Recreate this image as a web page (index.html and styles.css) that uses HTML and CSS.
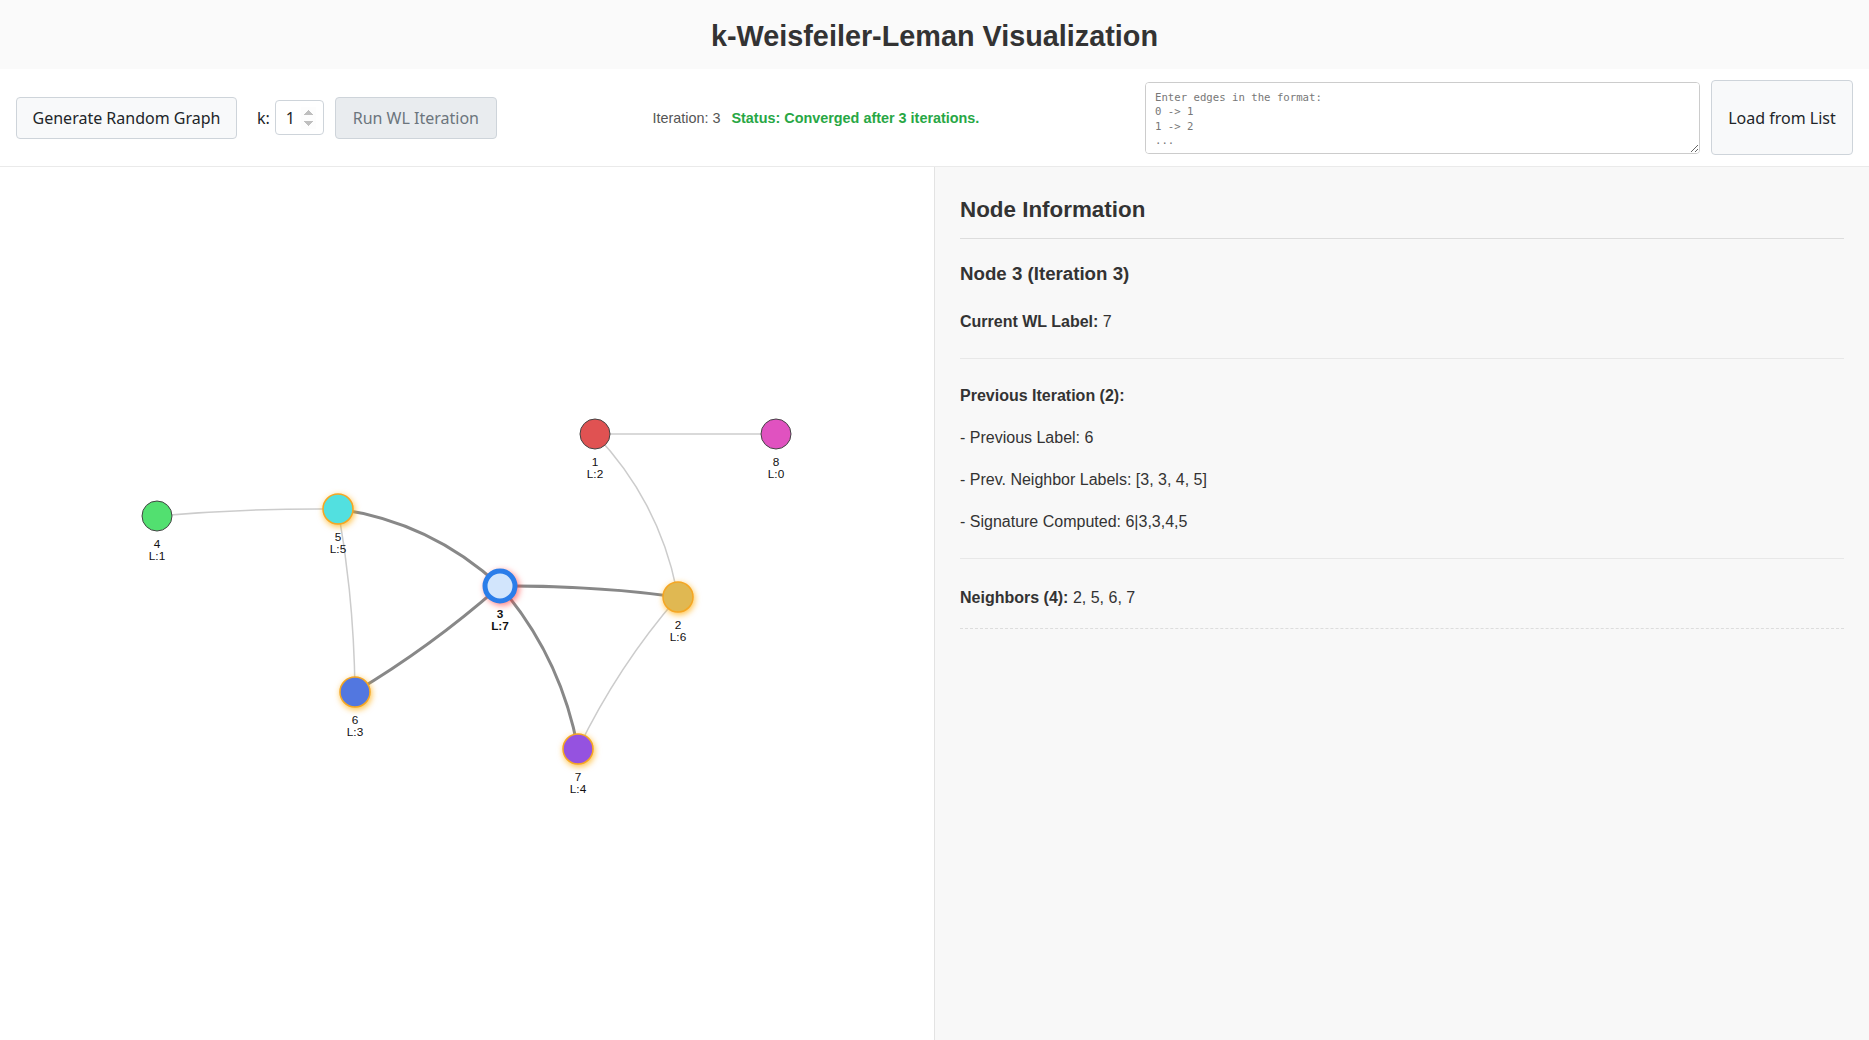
FILE: index.html
```html
<!DOCTYPE html>
<html lang="en">
<head>
<meta charset="utf-8">
<title>k-Weisfeiler-Leman Visualization</title>
<link rel="stylesheet" href="styles.css">
</head>
<body>
<header class="page-header">
  <h1>k-Weisfeiler-Leman Visualization</h1>
</header>
<div class="toolbar">
  <div class="controls">
    <button class="btn btn-gen">Generate Random Graph</button>
    <label class="k-label" for="k">k:</label>
    <input class="k-input" id="k" type="number" value="1" min="1">
    <button class="btn btn-disabled" disabled>Run WL Iteration</button>
  </div>
  <div class="status">
    <span class="iteration">Iteration: 3</span>
    <span class="converged">Status: Converged after 3 iterations.</span>
  </div>
  <div class="edge-input">
    <textarea class="edges" placeholder="Enter edges in the format:&#10;0 -> 1&#10;1 -> 2&#10;..."></textarea>
    <button class="btn btn-load">Load from List</button>
  </div>
</div>
<main class="main">
  <section class="graph">
    <svg class="graph-svg" viewBox="0 167 934 873" preserveAspectRatio="xMinYMin meet">
      <g class="edges-thin">
        <path d="M157,516 Q250,508 338,509"/>
        <path d="M338,509 Q354,598 355,692"/>
        <path d="M595,434 L776,434"/>
        <path d="M595,434 Q661,503 678,597"/>
        <path d="M678,597 Q618,666 578,749"/>
      </g>
      <g class="edges-thick">
        <path d="M338,509 Q431,522 500,586"/>
        <path d="M500,586 Q590,585 678,597"/>
        <path d="M500,586 Q432,646 355,692"/>
        <path d="M500,586 Q561,657 578,749"/>
      </g>
      <g class="nodes">
        <circle class="node" cx="595" cy="434" r="15" fill="#e05252"/>
        <circle class="node" cx="776" cy="434" r="15" fill="#e052c0"/>
        <circle class="node" cx="157" cy="516" r="15" fill="#52e070"/>
        <circle class="node nb" cx="338" cy="509" r="15" fill="#52e0e0"/>
        <circle class="node nb" cx="678" cy="597" r="15" fill="#e0b852"/>
        <circle class="node nb" cx="355" cy="692" r="15" fill="#5277e0"/>
        <circle class="node nb" cx="578" cy="749" r="15" fill="#9552e0"/>
        <circle class="node sel" cx="500" cy="586" r="15" fill="#d2e5fc"/>
      </g>
      <g class="labels">
        <text x="595" y="466">1</text><text x="595" y="478">L:2</text>
        <text x="776" y="466">8</text><text x="776" y="478">L:0</text>
        <text x="157" y="548">4</text><text x="157" y="560">L:1</text>
        <text x="338" y="541">5</text><text x="338" y="553">L:5</text>
        <text x="678" y="629">2</text><text x="678" y="641">L:6</text>
        <text x="355" y="724">6</text><text x="355" y="736">L:3</text>
        <text x="578" y="781">7</text><text x="578" y="793">L:4</text>
        <text class="sel-label" x="500" y="618">3</text><text class="sel-label" x="500" y="630">L:7</text>
      </g>
    </svg>
  </section>
  <aside class="info">
    <h2>Node Information</h2>
    <h3>Node 3 (Iteration 3)</h3>
    <div class="section">
      <p><strong>Current WL Label:</strong> 7</p>
    </div>
    <div class="section">
      <p><strong>Previous Iteration (2):</strong></p>
      <p>- Previous Label: 6</p>
      <p>- Prev. Neighbor Labels: [3, 3, 4, 5]</p>
      <p>- Signature Computed: 6|3,3,4,5</p>
    </div>
    <div class="neighbors">
      <p><strong>Neighbors (4):</strong> 2, 5, 6, 7</p>
    </div>
  </aside>
</main>
</body>
</html>
```

FILE: styles.css
```css
* { box-sizing: border-box; }
html, body { margin: 0; padding: 0; }
body {
  font-family: "Liberation Sans", Arial, sans-serif;
  color: #333;
  background: #fff;
  height: 100vh;
  display: flex;
  flex-direction: column;
  overflow: hidden;
}
.page-header {
  background: #fafafa;
  padding: 20px 0 16px;
  text-align: center;
}
.page-header h1 {
  margin: 0;
  font-size: 28.8px;
  font-weight: bold;
  color: #333;
  line-height: 33px;
}
.toolbar {
  display: flex;
  align-items: center;
  justify-content: space-between;
  padding: 11px 16px;
  background: #fff;
  border-bottom: 1px solid #eaeaea;
}
.controls { display: flex; align-items: center; }
.btn {
  font-family: "Noto Sans", sans-serif;
  font-size: 16px;
  color: #212529;
  background: #f8f9fa;
  border: 1px solid #ced4da;
  border-radius: 4px;
  padding: 0 16px;
  height: 42px;
  line-height: 20px;
  cursor: pointer;
}
.btn-gen { width: 221px; padding: 0; }
.btn-disabled {
  background: #e9ecef;
  color: #6c757d;
  cursor: default;
  width: 162px;
  padding: 0;
}
.k-label {
  font-family: "Noto Sans", sans-serif;
  font-size: 16px;
  color: #212529;
  margin: 0 5px 0 20px;
}
.k-input {
  font-family: "Noto Sans", sans-serif;
  font-size: 16px;
  width: 49px;
  height: 35px;
  padding: 0 7px 0 10px;
  border: 1px solid #ced4da;
  border-radius: 4px;
  margin-right: 11px;
  color: #212529;
}
.k-input::-webkit-inner-spin-button,
.k-input::-webkit-outer-spin-button {
  opacity: 0.55;
}
.status {
  display: flex;
  align-items: center;
  gap: 11px;
  font-size: 14.4px;
  margin-right: 10px;
}
.iteration { color: #555; }
.converged { color: #28a745; font-weight: bold; }
.edge-input { display: flex; align-items: center; gap: 11px; }
.edges {
  width: 555px;
  height: 72px;
  padding: 8px 9px;
  font-family: "DejaVu Sans Mono", monospace;
  font-size: 10.67px;
  line-height: 14.5px;
  border: 1px solid #ccc;
  border-radius: 4px;
  resize: vertical;
  color: #333;
}
.edges::placeholder { color: #777; }
.btn-load {
  height: 75px;
  width: 142px;
  padding: 0 10px;
}
.main {
  flex: 1;
  display: flex;
  min-height: 0;
}
.graph {
  width: 934px;
  background: #fff;
}
.graph-svg { display: block; width: 934px; height: 873px; }
.edges-thin path { fill: none; stroke: #cccccc; stroke-width: 1.5; }
.edges-thick path { fill: none; stroke: #888888; stroke-width: 3; }
.node { stroke: #444; stroke-width: 1; }
.node.nb {
  stroke: #f5a623;
  stroke-width: 1.5;
  filter: drop-shadow(1px 2px 3px rgba(255, 170, 0, 0.75));
}
.node.sel {
  stroke: #2b7de9;
  stroke-width: 5;
  filter: drop-shadow(2px 2px 3px rgba(255, 40, 40, 0.6));
}
.labels text {
  font-family: "Liberation Sans", Arial, sans-serif;
  font-size: 11.8px;
  fill: #111;
  text-anchor: middle;
}
.labels .sel-label { font-weight: bold; }
.info {
  flex: 1;
  background: #f8f8f8;
  border-left: 1px solid #e3e3e3;
  padding: 30px 25px;
}
.info h2 {
  margin: 0;
  font-size: 22.4px;
  font-weight: bold;
  color: #333;
  padding-bottom: 15px;
  border-bottom: 1px solid #ddd;
}
.info h3 {
  margin: 24px 0 0;
  font-size: 18.7px;
  font-weight: bold;
  color: #333;
}
.info p {
  margin: 18px 0;
  font-size: 16px;
  line-height: 24px;
  color: #333;
}
.section {
  padding: 7px 0 6px;
  border-bottom: 1px solid #e8e8e8;
}
.neighbors {
  padding-top: 9px;
  border-bottom: 1px dashed #ddd;
}
```
